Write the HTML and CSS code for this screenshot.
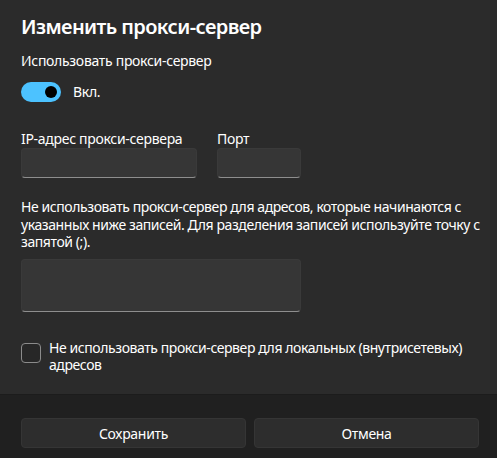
FILE: index.html
```html
<!DOCTYPE html>
<html lang="ru">
<head>
<meta charset="utf-8">
<title>Изменить прокси-сервер</title>
<link rel="stylesheet" href="styles.css">
</head>
<body>
<div class="dialog">
  <div class="content">
    <h1 class="title">Изменить прокси-сервер</h1>
    <div class="label use-label">Использовать прокси-сервер</div>
    <div class="toggle-row">
      <span class="toggle"><span class="knob"></span></span>
      <span class="toggle-text">Вкл.</span>
    </div>
    <div class="fields">
      <div class="field ip">
        <div class="field-label">IP-адрес прокси-сервера</div>
        <div class="input"></div>
      </div>
      <div class="field port">
        <div class="field-label">Порт</div>
        <div class="input"></div>
      </div>
    </div>
    <p class="desc">Не использовать прокси-сервер для адресов, которые начинаются с указанных ниже записей. Для разделения записей используйте точку с запятой (;).</p>
    <div class="textarea"></div>
    <div class="check-row">
      <span class="checkbox"></span>
      <span class="check-text">Не использовать прокси-сервер для локальных (внутрисетевых) адресов</span>
    </div>
  </div>
  <div class="footer">
    <button class="btn">Сохранить</button>
    <button class="btn">Отмена</button>
  </div>
</div>
</body>
</html>
```
FILE: styles.css
```css
html, body {
  margin: 0;
  padding: 0;
  height: 100%;
}
body {
  background: #2b2b2b;
  color: #ffffff;
  font-family: "Noto Sans", "Open Sans", sans-serif;
  font-size: 14px;
  letter-spacing: -0.3px;
  overflow: hidden;
}
.dialog {
  display: flex;
  flex-direction: column;
  height: 458px;
}
.content {
  flex: 1;
  padding: 13px 18px 0 21px;
}
.title {
  margin: 0;
  font-size: 20px;
  line-height: 28px;
  font-weight: 600;
  letter-spacing: -0.6px;
}
.use-label {
  margin-top: 10px;
  line-height: 20px;
}
.toggle-row {
  display: flex;
  align-items: center;
  gap: 12px;
  margin-top: 11px;
  height: 20px;
}
.toggle {
  position: relative;
  width: 40px;
  height: 20px;
  border-radius: 10px;
  background: #4cc2ff;
  box-sizing: border-box;
}
.knob {
  position: absolute;
  top: 4px;
  right: 4px;
  width: 12px;
  height: 12px;
  border-radius: 50%;
  background: #000;
}
.toggle-text {
  line-height: 20px;
}
.fields {
  display: flex;
  gap: 20px;
  margin-top: 28px;
}
.field-label {
  line-height: 18px;
}
.ip .input { width: 176px; }
.port .input { width: 84px; }
.input {
  height: 30px;
  box-sizing: border-box;
  background: #363636;
  border: 1px solid #3a3a3a;
  border-bottom: 1px solid #8e8e8e;
  border-radius: 4px;
}
.desc {
  margin: 20px -4px 0 0;
  line-height: 17.5px;
  letter-spacing: -0.42px;
}
.textarea {
  margin-top: 8px;
  width: 280px;
  height: 53px;
  box-sizing: border-box;
  background: #363636;
  border: 1px solid #3a3a3a;
  border-bottom: 1px solid #8e8e8e;
  border-radius: 4px;
}
.check-row {
  display: flex;
  gap: 8px;
  margin-top: 27px;
}
.checkbox {
  flex: none;
  width: 20px;
  height: 20px;
  box-sizing: border-box;
  margin-top: 4px;
  border: 1px solid #8b8b8b;
  border-radius: 4px;
  background: #272727;
}
.check-text {
  line-height: 17.5px;
  letter-spacing: -0.42px;
}
.footer {
  flex: none;
  height: 64px;
  box-sizing: border-box;
  background: #202020;
  border-top: 1px solid #1c1c1c;
  padding: 23px 18px 0 21px;
  display: flex;
  gap: 8px;
  align-items: flex-start;
}
.btn {
  flex: 1;
  height: 30px;
  background: #2d2d2d;
  border: 1px solid #353535;
  border-radius: 4px;
  color: #ffffff;
  font-family: inherit;
  font-size: 14px;
  letter-spacing: -0.3px;
  padding: 0;
}
```
